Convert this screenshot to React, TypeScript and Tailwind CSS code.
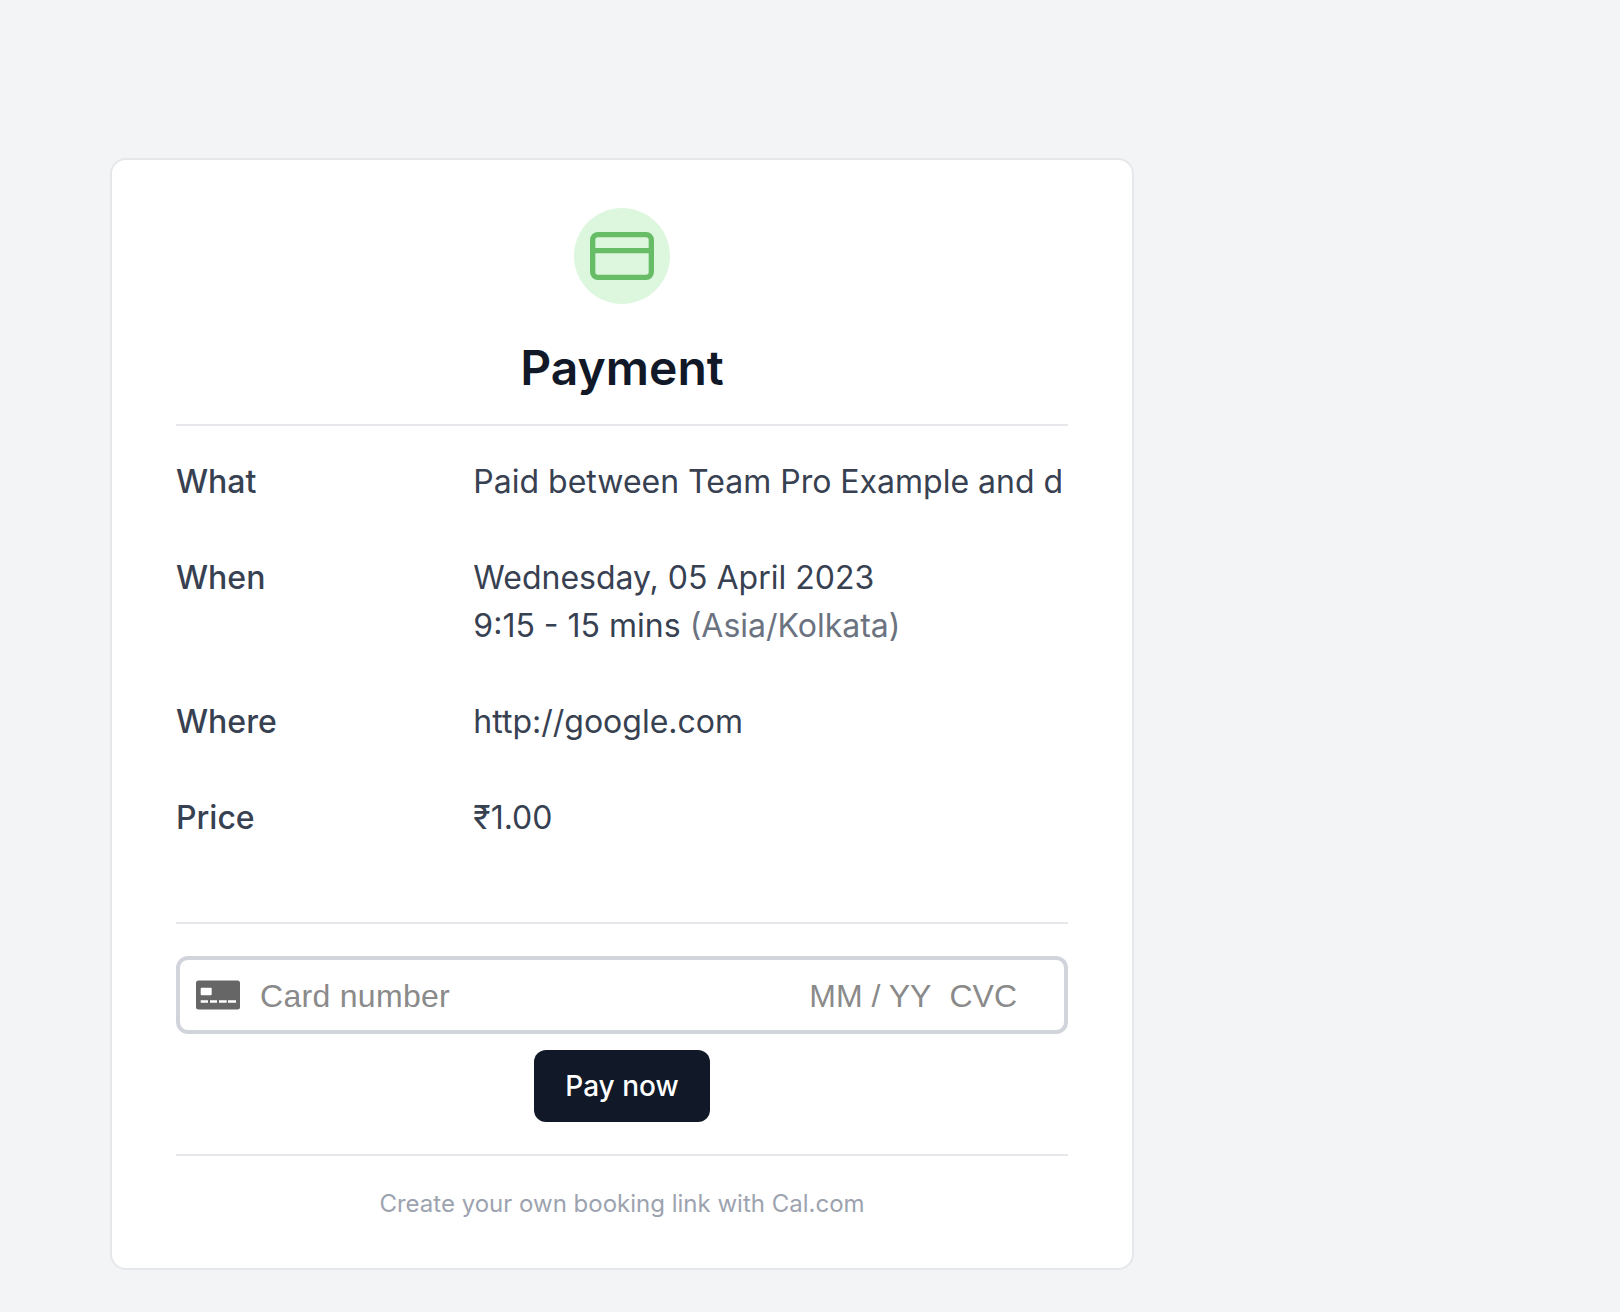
import { FiCreditCard } from "react-icons/fi";

const rows = [
  { label: "What", value: "Paid between Team Pro Example and daily@example.com" },
  { label: "When", value: "Wednesday, 05 April 2023" },
  { label: "Where", value: "http://google.com" },
  { label: "Price", value: "₹1.00" },
];

function StripeCardIcon() {
  return (
    <svg viewBox="0 0 44 30" className="h-[30px] w-[44px] shrink-0">
      <rect width="44" height="29" y="0.5" rx="2.5" fill="#666666" />
      <rect x="4.7" y="7.7" width="11" height="7.5" rx="1" fill="#ffffff" />
      <path d="M4.7 21.5h7.3M14 21.5h7M23 21.5h7.7M32 21.5h8" stroke="#ffffff" strokeWidth="2.4" />
    </svg>
  );
}

export default function App() {
  return (
    <div className="min-h-[1312px] bg-[#f3f4f6] pl-[110px] pt-[158px] font-['Inter',sans-serif]">
      <div className="w-[1024px] rounded-[16px] border-2 border-[#e5e7eb] bg-white px-[64px] pt-[48px] pb-[48px]">
        <div className="flex h-24 w-24 mx-auto items-center justify-center rounded-full bg-[#dcf7de]">
          <FiCreditCard className="h-16 w-16 text-[#67bd66]" />
        </div>
        <h1 className="mt-[40px] text-center text-[48px] leading-[48px] font-semibold text-[#111827]">Payment</h1>

        <div className="mt-[32px] border-t-2 border-[#e5e7eb] pt-[32px] text-[32px] leading-[48px] text-[#374151]">
          <div className="flex flex-col gap-[48px]">
            {rows.map((row) => (
              <div key={row.label} className="grid grid-cols-3">
                <div className="font-medium">{row.label}</div>
                <div className="col-span-2 overflow-hidden">
                  {row.label === "What" ? (
                    <div className="w-[588px] overflow-hidden whitespace-nowrap">{row.value}</div>
                  ) : (
                    <div>{row.value}</div>
                  )}
                  {row.label === "When" && (
                    <div>
                      9:15 - 15 mins <span className="text-[#6b7280]">(Asia/Kolkata)</span>
                    </div>
                  )}
                </div>
              </div>
            ))}
          </div>
        </div>

        <div className="mt-[80px] border-t-2 border-[#e5e7eb] pt-[32px]">
          <div className="flex h-[78px] items-center rounded-[12px] border-4 border-[#d1d5db] pl-[16px] font-['Liberation_Sans',sans-serif] text-[32px] text-[#8a8a8a]">
            <StripeCardIcon />
            <span className="ml-[20px] pt-[2px] tracking-[0.3px]">Card number</span>
            <span className="ml-auto mr-[18px] pt-[2px]">MM / YY</span>
            <span className="mr-[47px] pt-[2px]">CVC</span>
          </div>
          <div className="mt-[16px] flex justify-center">
            <button className="h-[72px] w-[176px] rounded-[12px] bg-[#111827] text-[28px] font-medium text-white">Pay now</button>
          </div>
        </div>

        <div className="mt-[32px] border-t-2 border-[#e5e7eb] pt-[32px] text-center text-[24px] leading-[32px] text-[#9ca3af]">
          Create your own booking link with Cal.com
        </div>
      </div>
    </div>
  );
}
